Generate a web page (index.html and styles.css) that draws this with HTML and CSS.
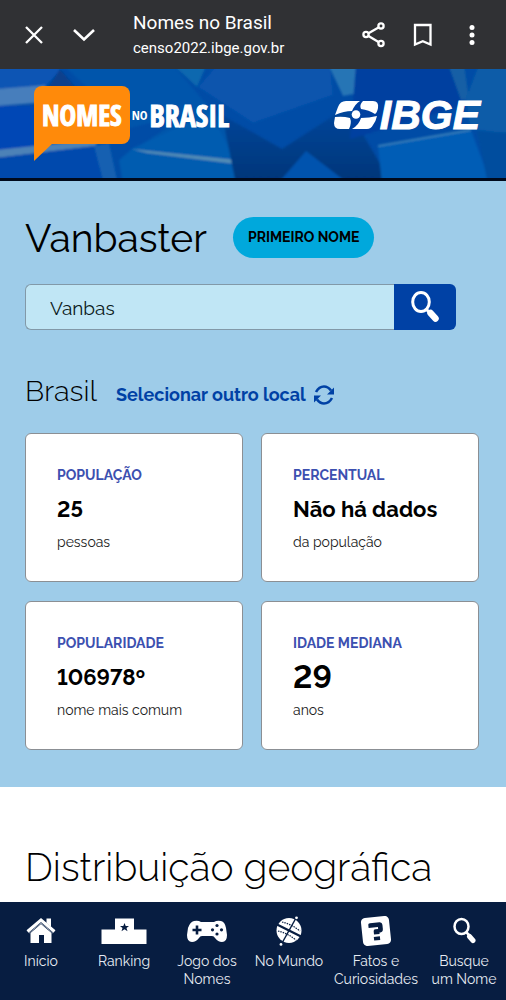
FILE: index.html
```html
<!DOCTYPE html>
<html lang="pt-BR">
<head>
<meta charset="utf-8">
<meta name="viewport" content="width=device-width, initial-scale=1">
<title>Nomes no Brasil</title>
<link rel="stylesheet" href="styles.css">
</head>
<body>
<div class="browser-bar">
  <button class="bar-button" aria-label="Fechar"><svg width="24" height="24" viewBox="0 0 24 24"><path d="M4 4l16 16M20 4L4 20"/></svg></button>
  <button class="bar-button bar-button-down" aria-label="Minimizar"><svg width="24" height="24" viewBox="0 0 24 24"><path d="M2 7l10 9.500L22 7" stroke-width="2.600"/></svg></button>
  <div class="bar-text">
    <div class="bar-title">Nomes no Brasil</div>
    <div class="bar-url">censo2022.ibge.gov.br</div>
  </div>
  <div class="bar-actions">
    <button class="bar-button" aria-label="Compartilhar"><svg width="24" height="28" viewBox="0 0 24 28"><path d="M16.500 6.500L6.500 12.300M6.500 15L16.500 21"/><circle cx="19" cy="5" r="2.600"/><circle cx="4" cy="13.500" r="2.600"/><circle cx="19" cy="22.500" r="2.600"/></svg></button>
    <button class="bar-button" aria-label="Salvar"><svg width="24" height="28" viewBox="0 0 24 28"><path d="M4 4h15.500v19.500L11.800 20.200 4 23.500z"/></svg></button>
    <button class="bar-button" aria-label="Mais opções"><svg width="24" height="28" viewBox="0 0 24 28"><g fill="#fff" stroke="none"><circle cx="12" cy="6.500" r="2.500"/><circle cx="12" cy="14" r="2.500"/><circle cx="12" cy="21.500" r="2.500"/></g></svg></button>
  </div>
</div>

<header class="hero">
  <svg class="hero-art" viewBox="0 0 506 109" preserveAspectRatio="xMidYMid slice" aria-hidden="true">
    <defs>
      <linearGradient id="shade" x1="0" y1="0" x2="0" y2="1"><stop offset="0" stop-color="#00479c"/><stop offset="1" stop-color="#003578"/></linearGradient>
      <filter id="soften" x="-5%" y="-5%" width="110%" height="110%"><feGaussianBlur stdDeviation="1.200"/></filter>
    </defs>
    <rect width="506" height="109" fill="#004ca6"/>
    <g filter="url(#soften)">
      <path d="M-5-5h71L46 17-5 20z" fill="#0754b4"/>
      <path d="M60 0l-13 20h30z" fill="#073f8c"/>
      <path d="M-5 20l51-4-10 18-41 3z" fill="#477ebc"/>
      <path d="M-5 37h40v43l-40 4z" fill="#0046b5"/>
      <path d="M-5 81l105-11-5 7-100 12z" fill="#4d82b7"/>
      <path d="M-5 89l101-12 8 38H-5z" fill="#0049ad"/>
      <path d="M94 77l15-3 9 41h-14z" fill="#1260b1"/>
      <path d="M62-5h110l38 44-80 20z" fill="#0055ab"/>
      <path d="M172-5h35l-10 23z" fill="#0a68af"/>
      <path d="M198 18l20-23h112l3 31-80 28z" fill="#0754ad"/>
      <path d="M210 39l38 42H133l66-43z" fill="#0056aa"/>
      <path d="M119 91l14-12 77-36 38 72H123z" fill="#005bb0"/>
      <path d="M131 80l115 12-2 4-97-12z" fill="#548eb6"/>
      <path d="M222 46l60 34 65-42 45 77H236z" fill="url(#shade)"/>
      <path d="M280 112l26-30 43 33z" fill="#0053ae"/>
      <path d="M328-5h28l8 28-21 4z" fill="#2675b5"/>
      <path d="M356-5h94l15 41-115 34z" fill="#0040a0"/>
      <path d="M448-5h16l5 35-8 1z" fill="#125fa5"/>
      <path d="M466 29l13-34h32v70l-41-5z" fill="#075ba8"/>
      <path d="M378 77l93-16 20 54H382z" fill="#055db6"/>
      <path d="M378 76l92-16 1 2-93 16z" fill="#357db8"/>
      <path d="M477 62l34 2v51h-23z" fill="#004d9e"/>
    </g>
  </svg>
  <a class="brand" href="#inicio" aria-label="Nomes no Brasil">
    <span class="brand-bubble">NOMES<svg class="brand-tail" width="19" height="18" viewBox="0 0 19 18" aria-hidden="true"><path d="M0 0h19L0 18z" fill="#ff8a0a"/></svg></span>
    <span class="brand-no">NO</span>
    <span class="brand-name">BRASIL</span>
  </a>
  <a class="ibge" href="#ibge" aria-label="IBGE">
    <svg width="45" height="30" viewBox="0 0 45 30" aria-hidden="true">
      <g fill="#fff">
        <path d="M4 7Q6 1 12 1h14q-5 3-8 10-8 0-17 4z"/>
        <path d="M29 1h10q6 0 5 7-1 5-3 6-6-4-14-5-2-4 2-8z"/>
        <path d="M1 17q8-1 15 1 2 5-1 11H6q-6 0-6-6z"/>
        <path d="M43 16q-1 5-4 9-2 4-6 4H18q7-4 9-11 8 0 16-2z"/>
        <circle cx="22" cy="14.500" r="4.300"/>
      </g>
    </svg>
    <span>IBGE</span>
  </a>
</header>

<main>
  <section class="summary">
    <div class="name-row"><h1>Vanbaster</h1><span class="pill">PRIMEIRO NOME</span></div>
    <form class="search">
      <input type="text" value="Vanbas" aria-label="Nome">
      <button type="button" aria-label="Buscar"><svg width="30" height="34" viewBox="0 0 30 34"><ellipse cx="11" cy="12" rx="8.300" ry="9.500" fill="none" stroke="#fff" stroke-width="3"/><path d="M16 19l4 4" stroke="#fff" stroke-width="3"/><path d="M20.500 23l5 5.500" stroke="#fff" stroke-width="6.500" stroke-linecap="round"/></svg></button>
    </form>
    <div class="place-row">
      <h2>Brasil</h2>
      <a class="place-link" href="#local">Selecionar outro local
        <svg width="20" height="20" viewBox="0 0 20 20" aria-hidden="true"><g fill="none" stroke="#0041a5" stroke-width="2.600"><path d="M2 7Q5 1.500 10 1.500q4 0 7 4"/><path d="M18 13q-3 5.500-8 5.500-4 0-7-4"/></g><path d="M20 2.500v7h-7zM0 17.500v-7h7z" fill="#0041a5"/></svg></a>
    </div>
    <div class="cards">
      <article class="card"><h3>POPULAÇÃO</h3><p class="value">25</p><p class="unit">pessoas</p></article>
      <article class="card"><h3>PERCENTUAL</h3><p class="value">Não há dados</p><p class="unit">da população</p></article>
      <article class="card"><h3>POPULARIDADE</h3><p class="value">106978º</p><p class="unit">nome mais comum</p></article>
      <article class="card"><h3>IDADE MEDIANA</h3><p class="value value-large">29</p><p class="unit">anos</p></article>
    </div>
  </section>
  <section class="geo"><h2>Distribuição geográfica</h2></section>
</main>

<nav class="tabs">
  <a href="#inicio"><svg width="30" height="30" viewBox="0 0 30 30" aria-hidden="true"><path d="M4.500 17L15 8l10.500 9v10H18v-8h-5v8H4.500z" fill="#fff"/><path d="M1.500 15.500L15 4l13.500 11.500" fill="none" stroke="#fff" stroke-width="3"/><path d="M20.500 2.500H25V11l-4.500-4z" fill="#fff"/><path d="M3 17.200L15 7l12 10.200" fill="none" stroke="#8d9bb0" stroke-width="1"/></svg>Início</a>
  <a href="#ranking"><svg width="46" height="30" viewBox="0 0 46 30" aria-hidden="true"><path d="M.500 13.500H14v-11h19v11h12.500V28H.500z" fill="#fff"/><path d="M23.500 7l1.200 3H28l-2.500 2 1 3.300-3-2-3 2 1-3.300L19 10h3.300z" fill="#071d41"/></svg>Ranking</a>
  <a href="#jogo"><svg width="42" height="30" viewBox="0 0 42 30" aria-hidden="true"><path d="M8 5q4-1 7 1h13q3-2 7-1 4 1 5 7l1 7q0 7-5 7-4 0-7-4-1-2-3-2H16q-2 0-3 2-3 4-7 4-5 0-5-7l1-7q2-6 6-7z" fill="#fff"/><path d="M11 9.500v9M6.500 14h9" stroke="#071d41" stroke-width="2.600"/><g fill="#071d41"><circle cx="31" cy="9.500" r="1.600"/><circle cx="31" cy="18" r="1.600"/><circle cx="26.500" cy="13.800" r="1.600"/><circle cx="35.500" cy="13.800" r="1.600"/></g></svg>Jogo dos<br>Nomes</a>
  <a href="#mundo"><svg width="30" height="30" viewBox="0 0 30 30" aria-hidden="true"><circle cx="15" cy="14.500" r="12.500" fill="#fff"/><path d="M3 8.500l25 12.500" stroke="#071d41" stroke-width="2.200"/><path d="M22 2L7.500 28" stroke="#071d41" stroke-width="1.500"/><path d="M8 6q9 2 18 9M4 15q9 2 18 9" fill="none" stroke="#071d41" stroke-width="1.200" stroke-dasharray="1.500 1"/><circle cx="22.500" cy="1.800" r="1.400" fill="#fff"/><circle cx="7" cy="28.400" r="1.400" fill="#fff"/></svg>No Mundo</a>
  <a href="#fatos"><svg width="34" height="34" viewBox="0 0 32 32" aria-hidden="true"><g transform="rotate(-6 16 16)"><rect x="1" y="1" width="30" height="30" rx="4.500" fill="#fff"/><path d="M8.500 8.500q0-1.500 2-1.500h10q3 0 3 3v4.500q0 3.500-3 3.500h-1v1.500h-6V16q0-2 2-2h3v-2h-10zM13 22h6.500v4H13z" fill="#071d41"/></g></svg>Fatos e<br>Curiosidades</a>
  <a href="#busca"><svg width="24" height="30" viewBox="0 0 24 30" aria-hidden="true"><ellipse cx="9.500" cy="10.500" rx="7" ry="7.500" fill="none" stroke="#fff" stroke-width="2.500"/><path d="M14 16l3 3" stroke="#fff" stroke-width="2.500"/><path d="M17.500 20.500l3.500 4" stroke="#fff" stroke-width="5" stroke-linecap="round"/></svg>Busque<br>um Nome</a>
</nav>
</body>
</html>
```
FILE: styles.css
```css
* { box-sizing: border-box; }
body {
  margin: 0;
  padding-bottom: 98px;
  background: #fff;
  color: #000;
  font-family: Raleway, "Open Sans", sans-serif;
  font-variant-numeric: lining-nums;
}
h1, h2, h3, p { margin: 0; }
button { border: 0; padding: 0; font: inherit; cursor: pointer; }
a { text-decoration: none; }
svg { display: block; flex: none; }

.browser-bar {
  display: flex;
  align-items: center;
  min-height: 69px;
  padding: 0 22px;
  background: #303134;
  color: #fff;
  font-family: Roboto, sans-serif;
}
.bar-button { background: none; }
.bar-button svg { fill: none; stroke: #fff; stroke-width: 2.3; }
.bar-button-down { margin-left: 26px; }
.bar-text { margin-left: 37px; padding-top: 3px; }
.bar-title { font-size: 19px; line-height: 24px; }
.bar-url { font-size: 15px; line-height: 26px; }
.bar-actions { display: flex; gap: 25px; margin-left: auto; }

.hero {
  position: relative;
  display: flex;
  justify-content: space-between;
  align-items: flex-start;
  padding: 17px 26px 34px 34px;
  min-height: 112px;
  border-bottom: 3px solid #000a1c;
  background: #004fa8;
}
.hero-art { position: absolute; inset: 0; width: 100%; height: 100%; }
.brand {
  position: relative;
  display: flex;
  align-items: center;
  gap: 2px;
  color: #fff;
  font-family: "Open Sans Condensed", "Roboto Condensed", "Liberation Sans Narrow", Roboto, sans-serif;
  font-weight: 700;
}
.brand-bubble {
  position: relative;
  padding: 0 8px;
  border-radius: 8px 8px 8px 0;
  background: #ff8a0a;
  font-size: 28px;
  line-height: 58px;
  -webkit-text-stroke: 1px #fff;
}
.brand-tail { position: absolute; left: 0; top: 57px; }
.brand-no { font-size: 13px; }
.brand-name { font-size: 30px; -webkit-text-stroke: 1px #fff; }
.ibge {
  position: relative;
  display: flex;
  align-items: center;
  gap: 1px;
  margin-top: 14px;
  color: #fff;
  font: italic 700 41px/30px "Liberation Sans", sans-serif;
  -webkit-text-stroke: 1px #fff;
}

.summary { padding: 36px 27px 37px 25px; background: #9ecce9; }
.name-row { display: flex; align-items: center; gap: 26px; }
h1 { font-size: 39px; line-height: 40px; font-weight: 400; }
.pill {
  padding: 0 15px;
  border-radius: 24px;
  background: #00a8dc;
  font-size: 14px;
  line-height: 41px;
  font-weight: 700;
}
.search { display: flex; margin: 26px 23px 0 0; height: 46px; }
.search input {
  flex: 1;
  min-width: 0;
  padding: 2px 24px 0;
  border: 1px solid #8299a8;
  border-right: 0;
  border-radius: 6px 0 0 6px;
  background: #c0e6f5;
  color: #0b1a20;
  font: 400 19px Raleway, "Open Sans", sans-serif;
}
.search button {
  display: grid;
  place-items: center;
  width: 62px;
  border-radius: 0 6px 6px 0;
  background: #0041a5;
}
.place-row { display: flex; align-items: center; gap: 19px; margin: 41px 0 22px; }
.place-row h2 { font-size: 29px; line-height: 40px; font-weight: 300; }
.place-link {
  display: flex;
  align-items: center;
  gap: 8px;
  padding-top: 8px;
  color: #0041a5;
  font-size: 18px;
  line-height: 24px;
  font-weight: 700;
}
.cards { display: grid; grid-template-columns: 1fr 1fr; gap: 19px 18px; }
.card {
  padding: 29px 8px 28px 31px;
  border: 1px solid #8b8f94;
  border-radius: 6px;
  background: #fff;
}
.card h3 { color: #3c50b0; font-size: 14px; line-height: 24px; font-weight: 700; }
.value { font-size: 22px; line-height: 44px; font-weight: 700; }
.value-large { font-size: 32px; }
.unit { color: #222; font-size: 14px; line-height: 22px; }

.geo { padding: 56px 25px; }
.geo h2 { font-size: 39px; line-height: 48px; font-weight: 300; }

.tabs {
  position: fixed;
  inset: auto 0 0;
  display: grid;
  grid-template-columns: 82fr 84fr 82fr 82fr 92fr 84fr;
  min-height: 98px;
  padding-top: 14px;
  background: #071d41;
}
.tabs a {
  display: flex;
  flex-direction: column;
  align-items: center;
  color: #e6ebf2;
  font-size: 14px;
  line-height: 18px;
  text-align: center;
}
.tabs svg { height: 30px; margin-bottom: 6px; }
```
